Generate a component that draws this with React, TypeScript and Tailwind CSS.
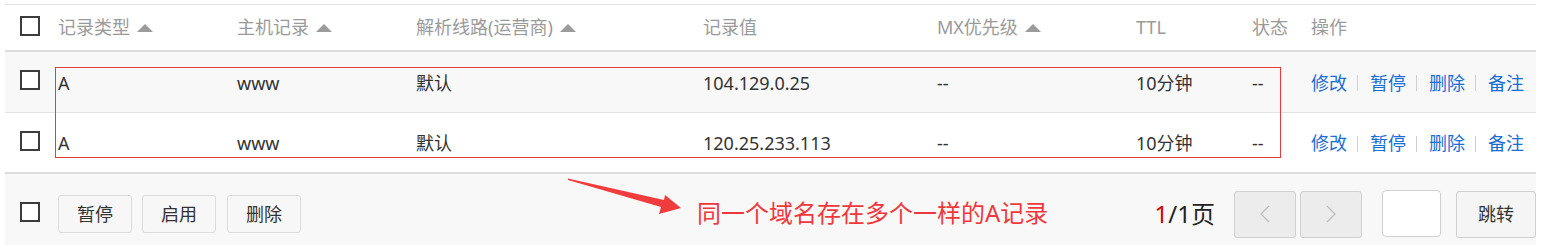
import React from "react";

const cols =
  "grid grid-cols-[53px_179px_179px_287px_234px_199px_116px_59px_1fr] items-center";

type Rec = { type: string; host: string; line: string; value: string; mx: string; ttl: string; status: string };

const records: Rec[] = [
  { type: "A", host: "www", line: "默认", value: "104.129.0.25", mx: "--", ttl: "10分钟", status: "--" },
  { type: "A", host: "www", line: "默认", value: "120.25.233.113", mx: "--", ttl: "10分钟", status: "--" },
];

const Checkbox = ({ className = "" }: { className?: string }) => (
  <span className={"block w-[20px] h-[20px] border-2 border-[#3c3c3c] bg-white " + className} />
);

const SortIcon = () => (
  <svg width="16" height="8" viewBox="0 0 16 8" className="ml-[7px]">
    <polygon points="8,0 16,8 0,8" fill="#9b9b9b" />
  </svg>
);

const HeadCell = ({ label, sort }: { label: string; sort?: boolean }) => (
  <div className="flex items-center">
    <span>{label}</span>
    {sort && <SortIcon />}
  </div>
);

const Actions = () => {
  const items = ["修改", "暂停", "删除", "备注"];
  return (
    <div className="flex items-center text-[#1a6dd5]">
      {items.map((t, i) => (
        <React.Fragment key={t}>
          {i > 0 && <span className="w-px h-[16px] bg-[#d0d0d0] ml-[10px] mr-[12px]" />}
          <span className="cursor-pointer">{t}</span>
        </React.Fragment>
      ))}
    </div>
  );
};

const Btn = ({ label, className = "" }: { label: string; className?: string }) => (
  <button
    className={
      "w-[74px] h-[38px] border border-[#dcdcdc] rounded-[3px] bg-[#f7f7f7] text-[#333] text-[18px] leading-none " +
      className
    }
  >
    {label}
  </button>
);

export default function App() {
  return (
    <div
      className="relative w-[1545px] h-[245px] overflow-hidden bg-white text-[18px]"
      style={{ fontFamily: "'Noto Sans', 'Noto Sans CJK SC', sans-serif" }}
    >
      <div className="ml-[5px] w-[1531px] pt-[4px]">
        {/* header */}
        <div className={cols + " h-[48px] border-t border-b-2 border-t-[#e2e2e2] border-b-[#dcdcdc] text-[#9a9a9a]"}>
          <div className="pl-[15px]">
            <Checkbox className="-translate-y-[2px]" />
          </div>
          <HeadCell label="记录类型" sort />
          <HeadCell label="主机记录" sort />
          <HeadCell label="解析线路(运营商)" sort />
          <HeadCell label="记录值" />
          <HeadCell label="MX优先级" sort />
          <HeadCell label="TTL" />
          <HeadCell label="状态" />
          <HeadCell label="操作" />
        </div>

        {/* rows */}
        {records.map((r, i) => (
          <div
            key={r.value}
            className={
              cols +
              " h-[61px] pt-[2px] text-[#333] " +
              (i === 0 ? "bg-[#f8f8f8] border-b border-[#e4e4e4]" : "bg-white border-b-2 border-[#dcdcdc]")
            }
          >
            <div className="pl-[15px]">
              <Checkbox className="-translate-y-[3px]" />
            </div>
            <div>{r.type}</div>
            <div>{r.host}</div>
            <div>{r.line}</div>
            <div>{r.value}</div>
            <div>{r.mx}</div>
            <div>{r.ttl}</div>
            <div>{r.status}</div>
            <Actions />
          </div>
        ))}

        {/* footer */}
        <div className="flex items-center justify-between h-[80px] bg-[#f8f8f8]">
          <div className="flex items-center">
            <Checkbox className="ml-[15px] mb-[4px]" />
            <Btn label="暂停" className="ml-[18px]" />
            <Btn label="启用" className="ml-[10px]" />
            <Btn label="删除" className="ml-[11px]" />
          </div>
          <div className="flex items-center">
            <span className="text-[24px] text-[#222] mr-[19px]">
              <span className="text-[#d40000]">1</span>/1页
            </span>
            <button className="w-[62px] h-[47px] flex items-center justify-center bg-[#ececec] border border-[#d0d0d0] rounded-[3px]">
              <svg width="10" height="18" viewBox="0 0 10 18">
                <polyline points="9,1 1,9 9,17" fill="none" stroke="#bdbdbd" strokeWidth="1.3" />
              </svg>
            </button>
            <button className="ml-[4px] w-[62px] h-[47px] flex items-center justify-center bg-[#ececec] border border-[#d0d0d0] rounded-[3px]">
              <svg width="10" height="18" viewBox="0 0 10 18">
                <polyline points="1,1 9,9 1,17" fill="none" stroke="#bdbdbd" strokeWidth="1.3" />
              </svg>
            </button>
            <input className="ml-[20px] mb-[1px] w-[59px] h-[47px] bg-white border border-[#d0d0d0] rounded-[4px] outline-none" />
            <button className="ml-[15px] w-[80px] h-[47px] bg-[#f5f5f5] border border-[#d0d0d0] rounded-[3px] text-[#333] text-[18px]">
              跳转
            </button>
          </div>
        </div>
      </div>

      {/* screenshot annotations */}
      <div className="absolute left-[55px] top-[67px] w-[1226px] h-[91px] border border-[#e83a3a] pointer-events-none" />
      <svg className="absolute left-[560px] top-[170px]" width="130" height="50" viewBox="560 170 130 50">
        <polygon
          points="568,178.5 664,200 665,195 681,208 659,214 661,207 568,180"
          fill="#f03c3c"
        />
      </svg>
      <span className="absolute left-[697px] top-[197px] text-[24px] leading-[32px] text-[#f0383c] whitespace-nowrap">
        同一个域名存在多个一样的A记录
      </span>
    </div>
  );
}
